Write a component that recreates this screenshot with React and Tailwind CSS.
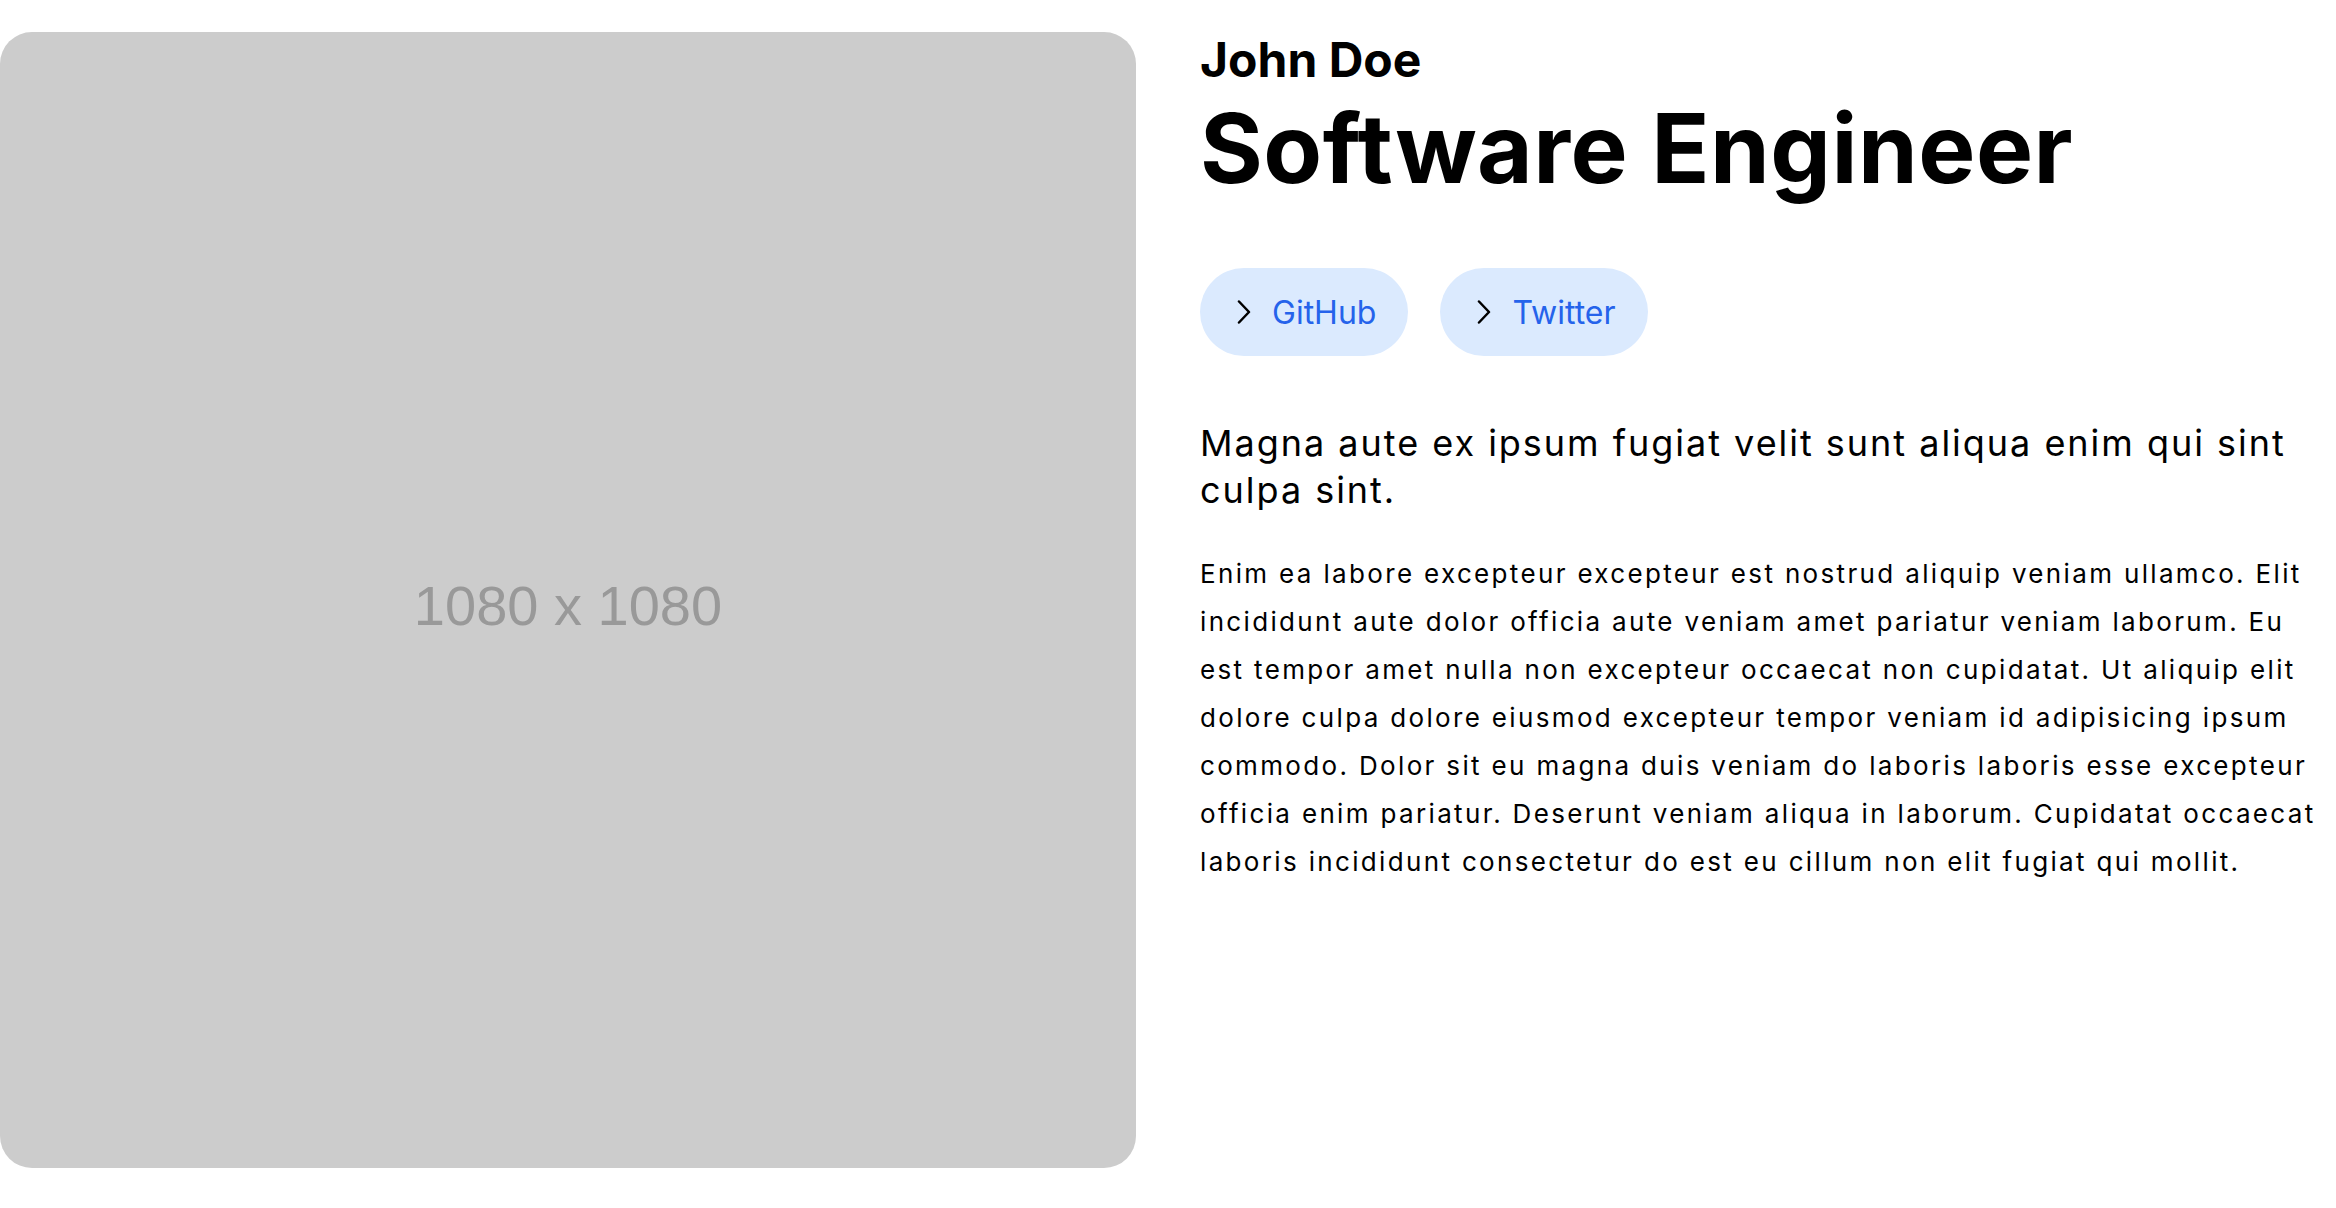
import React from 'react';

const links = ['GitHub', 'Twitter'];

function Chevron() {
  return (
    <svg width="16" height="24" viewBox="0 0 16 24" fill="none" className="shrink-0">
      <path d="M3 1.5 13 12 3 22.5" stroke="#000" strokeWidth="2.5" strokeLinecap="round" strokeLinejoin="round" />
    </svg>
  );
}

export default function App() {
  return (
    <div className="bg-white text-black font-['Inter',sans-serif] w-[2336px] h-[1208px] overflow-hidden">
      <div className="grid grid-cols-2 gap-16 pt-8">
        <div className="aspect-square rounded-[32px] bg-[#cccccc] flex items-center justify-center">
          <span className="mt-3 font-['Liberation_Sans',Arial,sans-serif] text-[56px] text-[#999999]">1080 x 1080</span>
        </div>

        <div className="flex flex-col">
          <h2 className="text-5xl leading-14 font-bold">John Doe</h2>
          <h1 className="text-8xl leading-tight font-bold tracking-[0.005em]">Software Engineer</h1>

          <div className="flex gap-8 mt-[60px]">
            {links.map((name) => (
              <a
                key={name}
                href="#"
                className="flex items-center gap-5 h-22 pl-9 pr-8 rounded-full bg-[#dbeafe] text-[#2563eb] text-[32px]"
              >
                <Chevron />
                <span className="translate-y-px">{name}</span>
              </a>
            ))}
          </div>

          <p className="mt-16 text-4xl leading-[1.3] tracking-[0.055em]">
            Magna aute ex ipsum fugiat velit sunt aliqua enim qui sint culpa sint.
          </p>

          <p className="mt-9 text-[26px] leading-12 tracking-[0.09em]">
            Enim ea labore excepteur excepteur est nostrud aliquip veniam ullamco. Elit incididunt aute dolor
            officia aute veniam amet pariatur veniam laborum. Eu est tempor amet nulla non excepteur occaecat non
            cupidatat. Ut aliquip elit dolore culpa dolore eiusmod excepteur tempor veniam id adipisicing ipsum
            commodo. Dolor sit eu magna duis veniam do laboris laboris esse excepteur officia enim pariatur.
            Deserunt veniam aliqua in laborum. Cupidatat occaecat laboris incididunt consectetur do est eu cillum
            non elit fugiat qui mollit.
          </p>
        </div>
      </div>
    </div>
  );
}
